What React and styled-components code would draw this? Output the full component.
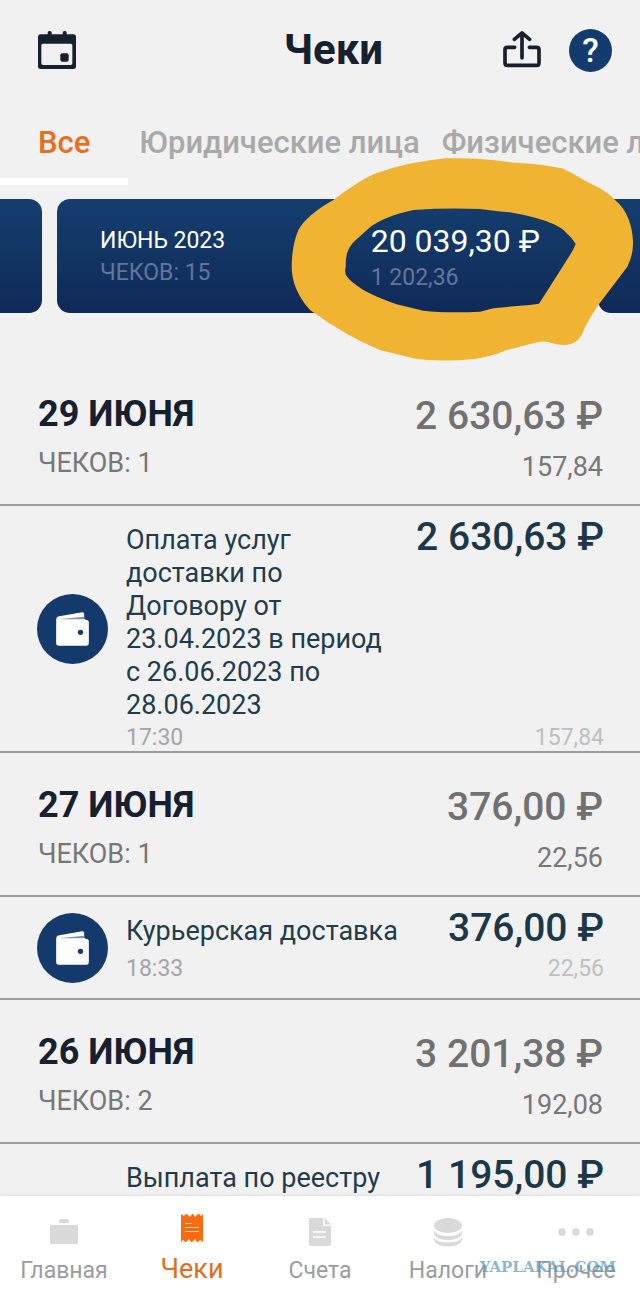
import React from 'react'
import styled, { createGlobalStyle } from 'styled-components'

const GlobalStyle = createGlobalStyle`
  * {
    box-sizing: border-box;
  }

  body {
    margin: 0;
    background: #f1f1f1;
    font-family: Roboto, 'Noto Sans', sans-serif;
  }

  button {
    padding: 0;
    border: 0;
    background: none;
    font: inherit;
    cursor: pointer;
  }

  h1, h2, p {
    margin: 0;
  }
`

const Screen = styled.div`
  display: flex;
  flex-direction: column;
  height: 100vh;
  overflow: hidden;
`

const Header = styled.header`
  display: flex;
  align-items: center;
  flex: none;
  height: 100px;
  padding: 0 28px 0 38px;
`

const Title = styled.h1`
  flex: 1;
  padding-left: 88px;
  text-align: center;
  font-size: 42px;
  line-height: 52px;
  font-weight: 700;
  color: #17202f;
`

const IconButton = styled.button`
  display: flex;
  color: #17202f;
`

const HelpButton = styled.button`
  width: 43px;
  height: 43px;
  margin-left: 28px;
  border-radius: 50%;
  && {
    background: #133b6d;
    color: #fff;
    font-size: 34px;
    line-height: 43px;
    font-weight: 500;
  }
`

const Tabs = styled.nav`
  display: flex;
  flex: none;
  height: 85px;
  overflow: hidden;
`

const Tab = styled.button`
  flex: none;
  && {
    padding: 8px ${props => (props.$active ? '38px' : '11px')} 0;
    border-bottom: 7px solid ${props => (props.$active ? '#fff' : 'transparent')};
    font-size: 31px;
    line-height: 34px;
    font-weight: 500;
    color: ${props => (props.$active ? '#e8701c' : '#a9a9a9')};
  }
`

const Carousel = styled.section`
  position: relative;
  display: flex;
  flex: none;
  justify-content: center;
  gap: 15px;
  margin: 14px 0 49px;
`

const Card = styled.article`
  display: flex;
  flex: 0 0 calc(100% - 114px);
  justify-content: space-between;
  height: 114px;
  padding: 26px 43px;
  border-radius: 13px;
  background: linear-gradient(#143e6e, #102a58);
  color: #fff;
`

const CardText = styled.p`
  font-size: ${props => (props.$large ? '32px' : '23px')};
  line-height: 32px;
`

const CardNote = styled.p`
  font-size: 23px;
  line-height: ${props => (props.$low ? '42px' : '32px')};
  color: #62779b;
`

const Scribble = styled.svg`
  position: absolute;
  top: -49px;
  left: calc(50% - 40px);
  width: 360px;
  height: 220px;
  pointer-events: none;
`

const List = styled.main`
  flex: 1;
  min-height: 0;
  overflow: hidden;
`

const Day = styled.header`
  display: flex;
  justify-content: space-between;
  height: 144px;
  padding: 29px 37px 0 38px;
  border-bottom: 2px solid #9c9c9c;
`

const DayTitle = styled.h2`
  font-size: 36px;
  line-height: 46px;
  font-weight: 700;
  color: #17202f;
`

const Total = styled.p`
  text-align: right;
  white-space: nowrap;
  font-size: 39px;
  line-height: 50px;
  font-weight: 500;
  color: ${props => (props.$dark ? '#1c3848' : '#717171')};
`

const DayNote = styled.p`
  font-size: 27px;
  line-height: 52px;
  text-align: ${props => (props.$right ? 'right' : 'left')};
  color: #777;
`

const Receipt = styled.article`
  display: flex;
  min-height: ${props => (props.$tall ? '247px' : '103px')};
  padding: 0 36px 0 37px;
  border-bottom: 2px solid #9c9c9c;
`

const Badge = styled.span`
  display: flex;
  flex: none;
  align-self: center;
  align-items: center;
  justify-content: center;
  width: 71px;
  height: 70px;
  margin-right: 18px;
  border-radius: 50%;
  background: #143a6c;
`

const ReceiptGrid = styled.div`
  display: grid;
  flex: 1;
  grid-template-columns: 275px 1fr;
  align-content: start;
  margin-bottom: -3px;
`

const Description = styled.p`
  padding-top: 18px;
  font-size: 27px;
  line-height: 33px;
  color: #213c4b;
`

const Amount = styled(Total)`
  padding-top: 6px;
`

const Small = styled.p`
  font-size: 23px;
  line-height: 32px;
  text-align: ${props => (props.$right ? 'right' : 'left')};
  color: ${props => (props.$right ? '#bdbfc1' : '#a3a5a9')};
`

const BottomNav = styled.nav`
  position: relative;
  display: grid;
  flex: none;
  grid-template-columns: repeat(5, 1fr);
  height: 100px;
  background: #fff;
  box-shadow: 0 -1px 3px rgba(0, 0, 0, 0.08);
`

const NavItem = styled.a`
  display: flex;
  flex-direction: column;
  align-items: center;
  gap: ${props => (props.$active ? '10px' : '8px')};
  padding-top: ${props => (props.$active ? '17px' : '21px')};
  text-decoration: none;
  font-size: ${props => (props.$active ? '27px' : '23px')};
  line-height: 32px;
  color: ${props => (props.$active ? '#e36d1e' : '#9a9ca0')};

  svg {
    flex: none;
    fill: ${props => (props.$active ? '#fb6a0b' : '#d9d9d9')};
  }
`

const Watermark = styled.span`
  position: absolute;
  top: 61px;
  right: 24px;
  font-family: 'DejaVu Serif', serif;
  font-size: 15px;
  line-height: 20px;
  font-weight: 700;
  color: rgba(88, 150, 190, 0.7);
`

const CalendarIcon = () => (
  <svg width='38' height='38' viewBox='0 0 114 114' fill='currentColor'>
    <rect x='29' width='12' height='24' rx='5' />
    <rect x='74' width='12' height='24' rx='5' />
    <path
      fillRule='evenodd'
      d='M8 10H106Q114 10 114 18V106Q114 114 106 114H8Q0 114 0 106V18Q0 10 8 10ZM15 38Q10 38 10 43V97Q10 102 15 102H98Q103 102 103 97V43Q103 38 98 38Z'
    />
    <rect x='67' y='67' width='25' height='25' rx='6' />
  </svg>
)

const ShareIcon = () => (
  <svg
    width='38'
    height='38'
    viewBox='0 0 114 114'
    fill='none'
    stroke='currentColor'
    strokeWidth='11'
    strokeLinecap='round'
    strokeLinejoin='round'
  >
    <path d='M35 49H13Q6 49 6 56V95Q6 103 13 103H101Q108 103 108 95V56Q108 49 101 49H79' />
    <path d='M57 81V6M34 25L57 6L80 25' />
  </svg>
)

const WalletIcon = () => (
  <svg width='33' height='34' viewBox='0 0 98 102'>
    <path
      fill='#fff'
      d='M0 24Q0 14 10 13L78 1Q84 0 84 7V20L88 23Q98 23 98 31V93Q98 101 90 101H8Q0 101 0 93Z'
    />
    <path fill='#8094b0' d='M12 21L84 14V20L82 22H16Z' />
    <circle cx='73' cy='61' r='8' fill='#143a6c' />
  </svg>
)

const HomeIcon = () => (
  <svg width='30' height='30' viewBox='0 0 30 30'>
    <rect x='10' y='2' width='10' height='4' rx='2' />
    <rect x='1' y='8' width='28' height='19' rx='1' />
  </svg>
)

const ReceiptIcon = () => (
  <svg width='30' height='30' viewBox='0 0 30 30'>
    <path d='M4 1L7 3L9 1H10L13 4L15 1H16L18 4L21 1H22L24 3L26 1V29L23 27L21 29H20L18 26L15 29H14L12 26L9 29H8L6 27L4 29Z' />
    <path stroke='#ffd9bd' d='M8 10.5H15M8 14.5H22M8 18.5H22' />
  </svg>
)

const InvoiceIcon = () => (
  <svg width='30' height='30' viewBox='0 0 30 30'>
    <path d='M5 1H18V9H26V27Q26 29 24 29H6Q4 29 4 27V2Q4 1 5 1Z' />
    <path d='M19.500 1L26 7.500H19.500Z' />
    <path stroke='#fff' strokeWidth='1.500' d='M8 15H21M8 20H21' />
  </svg>
)

const CoinsIcon = () => (
  <svg width='30' height='30' viewBox='0 0 30 30'>
    <ellipse cx='15' cy='8.500' rx='14' ry='7.500' />
    <path d='M1 14Q4 19 15 19T29 14V17Q26 23 15 23T1 17Z' />
    <path d='M1 20.500Q4 25.500 15 25.500T29 20.500V23Q26 29.500 15 29.500T1 23Z' />
  </svg>
)

const MoreIcon = () => (
  <svg width='38' height='30' viewBox='0 0 38 30'>
    <circle cx='5' cy='15' r='3.800' />
    <circle cx='19' cy='15' r='3.800' />
    <circle cx='33' cy='15' r='3.800' />
  </svg>
)

const tabs = ['Все', 'Юридические лица', 'Физические лица']

const days = [
  {
    date: '29 ИЮНЯ',
    count: 1,
    total: '2 630,63 ₽',
    tax: '157,84',
    receipts: [
      {
        text: 'Оплата услуг доставки по Договору от 23.04.2023 в период с 26.06.2023 по 28.06.2023',
        time: '17:30',
        amount: '2 630,63 ₽',
        tax: '157,84'
      }
    ]
  },
  {
    date: '27 ИЮНЯ',
    count: 1,
    total: '376,00 ₽',
    tax: '22,56',
    receipts: [
      { text: 'Курьерская доставка', time: '18:33', amount: '376,00 ₽', tax: '22,56' }
    ]
  },
  {
    date: '26 ИЮНЯ',
    count: 2,
    total: '3 201,38 ₽',
    tax: '192,08',
    receipts: [{ text: 'Выплата по реестру', amount: '1 195,00 ₽', tall: true }]
  }
]

const navItems = [
  { label: 'Главная', icon: HomeIcon },
  { label: 'Чеки', icon: ReceiptIcon, active: true },
  { label: 'Счета', icon: InvoiceIcon },
  { label: 'Налоги', icon: CoinsIcon },
  { label: 'Прочее', icon: MoreIcon }
]

function ReceiptRow({ text, time, amount, tax, tall }) {
  return (
    <Receipt $tall={tall}>
      <Badge>
        <WalletIcon />
      </Badge>
      <ReceiptGrid>
        <Description>{text}</Description>
        <Amount $dark>{amount}</Amount>
        <Small>{time}</Small>
        <Small $right>{tax}</Small>
      </ReceiptGrid>
    </Receipt>
  )
}

function App() {
  return (
    <Screen>
      <GlobalStyle />
      <Header>
        <IconButton aria-label='Календарь'>
          <CalendarIcon />
        </IconButton>
        <Title>Чеки</Title>
        <IconButton aria-label='Поделиться'>
          <ShareIcon />
        </IconButton>
        <HelpButton aria-label='Помощь'>?</HelpButton>
      </Header>
      <Tabs>
        {tabs.map((tab, i) => (
          <Tab key={tab} $active={i === 0}>
            {tab}
          </Tab>
        ))}
      </Tabs>
      <Carousel>
        <Card />
        <Card>
          <div>
            <CardText>ИЮНЬ 2023</CardText>
            <CardNote>ЧЕКОВ: 15</CardNote>
          </div>
          <div>
            <CardText $large>20 039,30 ₽</CardText>
            <CardNote $low>1 202,36</CardNote>
          </div>
        </Card>
        <Card />
        <Scribble viewBox='0 0 1080 660'>
          <path
            fill='#f0b432'
            fillRule='evenodd'
            d='M500 25Q600 22 700 38Q790 42 845 55C870 64 900 86 960 115Q990 133 1005 150C1042 180 1058 230 1059 275Q1060 315 1042 350L955 465Q935 495 915 530Q900 585 850 585Q825 584 805 576Q785 572 760 580L680 600Q640 618 590 626Q480 638 400 625L300 600Q200 560 90 480C50 435 35 390 35 350Q35 290 55 240Q80 195 160 150Q230 97 280 73Q380 35 500 25Z
              M400 180Q500 173 600 177Q650 184 690 187Q770 201 820 222Q850 236 860 250Q876 263 887 282Q880 300 870 315L800 425L777 461Q750 466 720 467L640 475L600 485Q500 490 430 482L350 463Q290 442 250 420Q210 395 198 376Q194 365 197 350Q197 315 205 300Q212 283 230 268L270 232Q310 200 400 180Z'
          />
        </Scribble>
      </Carousel>
      <List>
        {days.map(day => (
          <section key={day.date}>
            <Day>
              <div>
                <DayTitle>{day.date}</DayTitle>
                <DayNote>ЧЕКОВ: {day.count}</DayNote>
              </div>
              <div>
                <Total>{day.total}</Total>
                <DayNote $right>{day.tax}</DayNote>
              </div>
            </Day>
            {day.receipts.map(receipt => (
              <ReceiptRow key={receipt.text} {...receipt} />
            ))}
          </section>
        ))}
      </List>
      <BottomNav>
        {navItems.map(({ label, icon: Icon, active }) => (
          <NavItem href='#' key={label} $active={active}>
            <Icon />
            {label}
          </NavItem>
        ))}
        <Watermark>YAPLAKAL.COM</Watermark>
      </BottomNav>
    </Screen>
  )
}

export default App
